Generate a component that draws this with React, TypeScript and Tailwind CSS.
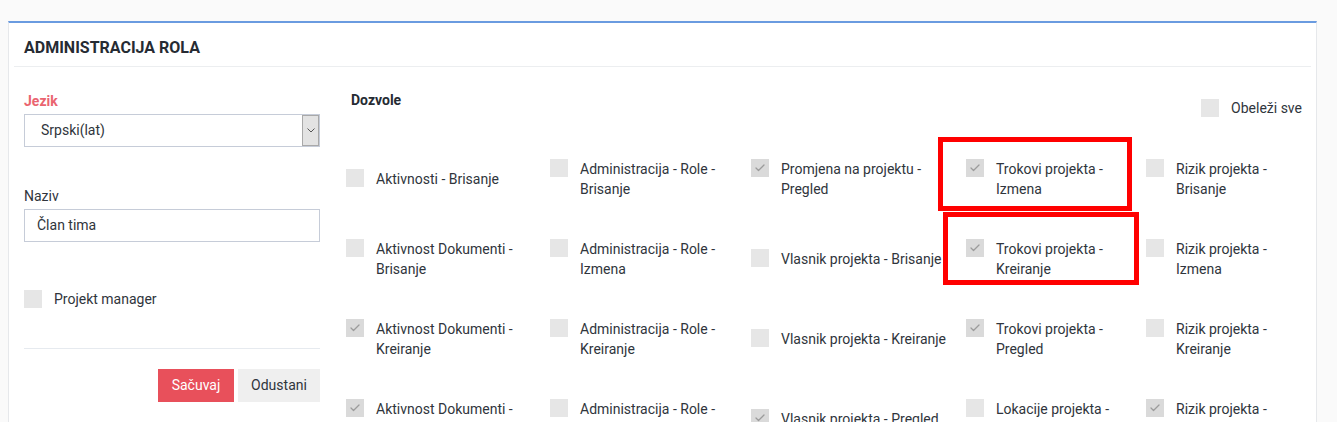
import { Check } from 'lucide-react'

type Perm = { lines: string[]; checked?: boolean }

const columns = ['w-[204px]', 'w-[201px]', 'w-[215px]', 'w-[180px]', 'flex-1']

const rows: Perm[][] = [
  [
    { lines: ['Aktivnosti - Brisanje'] },
    { lines: ['Administracija - Role -', 'Brisanje'] },
    { lines: ['Promjena na projektu -', 'Pregled'], checked: true },
    { lines: ['Trokovi projekta -', 'Izmena'], checked: true },
    { lines: ['Rizik projekta -', 'Brisanje'] },
  ],
  [
    { lines: ['Aktivnost Dokumenti -', 'Brisanje'] },
    { lines: ['Administracija - Role -', 'Izmena'] },
    { lines: ['Vlasnik projekta - Brisanje'] },
    { lines: ['Trokovi projekta -', 'Kreiranje'], checked: true },
    { lines: ['Rizik projekta -', 'Izmena'] },
  ],
  [
    { lines: ['Aktivnost Dokumenti -', 'Kreiranje'], checked: true },
    { lines: ['Administracija - Role -', 'Kreiranje'] },
    { lines: ['Vlasnik projekta - Kreiranje'] },
    { lines: ['Trokovi projekta -', 'Pregled'], checked: true },
    { lines: ['Rizik projekta -', 'Kreiranje'] },
  ],
  [
    { lines: ['Aktivnost Dokumenti -', 'Pregled'], checked: true },
    { lines: ['Administracija - Role -', 'Pregled'] },
    { lines: ['Vlasnik projekta - Pregled'], checked: true },
    { lines: ['Lokacije projekta -', 'Brisanje'] },
    { lines: ['Rizik projekta -', 'Pregled'], checked: true },
  ],
]

function Box({ checked }: { checked?: boolean }) {
  return (
    <span
      className={
        'flex h-[18px] w-[18px] shrink-0 items-center justify-center ' +
        (checked ? 'bg-[#dadada]' : 'bg-[#e6e6e6]')
      }
    >
      {checked && <Check className="h-3 w-3 text-[#9b9b9b]" strokeWidth={2.5} />}
    </span>
  )
}

function PermItem({ perm }: { perm: Perm }) {
  return (
    <div className="flex items-start gap-3">
      <Box checked={perm.checked} />
      <div className="whitespace-nowrap leading-5">
        {perm.lines.map((line) => (
          <div key={line}>{line}</div>
        ))}
      </div>
    </div>
  )
}

export default function App() {
  return (
    <div
      className="relative h-[422px] overflow-hidden bg-[#fafafa] pl-[8px] pr-[20px] pt-[21px] text-[14px] text-[#30353c]"
      style={{ fontFamily: 'Roboto, "Liberation Sans", sans-serif' }}
    >
      <div className="h-[420px] border-x border-t-2 border-x-[#e6e8eb] border-t-[#6a9be0] bg-white">
        <div className="mx-[5px] flex h-[44px] items-center border-b border-[#eceef0] pl-[10px] pt-[6px]">
          <h1 className="text-[16px] font-bold text-[#262b33]">ADMINISTRACIJA ROLA</h1>
        </div>

        <div className="flex gap-[26px] pl-[15px] pr-[14px] pt-[22px]">
          <div className="w-[296px] shrink-0">
            <p className="mt-[2px] leading-5 font-bold text-[#ea6470]">Jezik</p>
            <div className="mt-[3px] flex h-[33px] items-stretch border border-[#c6ccd8]">
              <span className="flex flex-1 items-center pl-[16px]">Srpski(lat)</span>
              <span className="flex w-[17px] items-center justify-center border border-[#a9a9a9] bg-[#e3e3e3]">
                <svg width="8" height="5" viewBox="0 0 8 5" fill="none">
                  <path d="M0.5 0.5L4 4L7.5 0.5" stroke="#555" strokeWidth="1" />
                </svg>
              </span>
            </div>

            <p className="mt-[39px] leading-5">Naziv</p>
            <div className="mt-[3px] flex h-[33px] items-center border border-[#c6ccd8] pl-[12px]">Član tima</div>

            <label className="mt-[47px] flex items-center gap-3">
              <Box />
              <span className="leading-5">Projekt manager</span>
            </label>

            <div className="mt-[39px] border-t border-[#e6eaef]" />

            <div className="mt-[20px] flex justify-end gap-[4px]">
              <button type="button" className="h-[33px] w-[76px] bg-[#e8505b] text-white">
                Sačuvaj
              </button>
              <button type="button" className="h-[33px] w-[82px] bg-[#efefef] text-[#30353c]">
                Odustani
              </button>
            </div>
          </div>

          <div className="min-w-0 flex-1">
            <div className="flex items-start justify-between">
              <p className="mt-[1px] pl-[5px] leading-5 font-bold text-[#262b33]">Dozvole</p>
              <label className="mt-[9px] flex items-center gap-3">
                <Box />
                <span className="leading-5">Obeleži sve</span>
              </label>
            </div>

            <div className="mt-[21px]">
              {rows.map((row, i) => (
                <div key={i} className="flex h-[80px] items-center">
                  {row.map((perm, j) => (
                    <div key={j} className={columns[j] + ' shrink-0'}>
                      <PermItem perm={perm} />
                    </div>
                  ))}
                </div>
              ))}
            </div>
          </div>
        </div>
      </div>

      <div className="pointer-events-none absolute left-[938px] top-[137px] h-[74px] w-[194px] border-[5px] border-[#ff0000]" />
      <div className="pointer-events-none absolute left-[943px] top-[212px] h-[73px] w-[196px] border-[5px] border-[#ff0000]" />
    </div>
  )
}
